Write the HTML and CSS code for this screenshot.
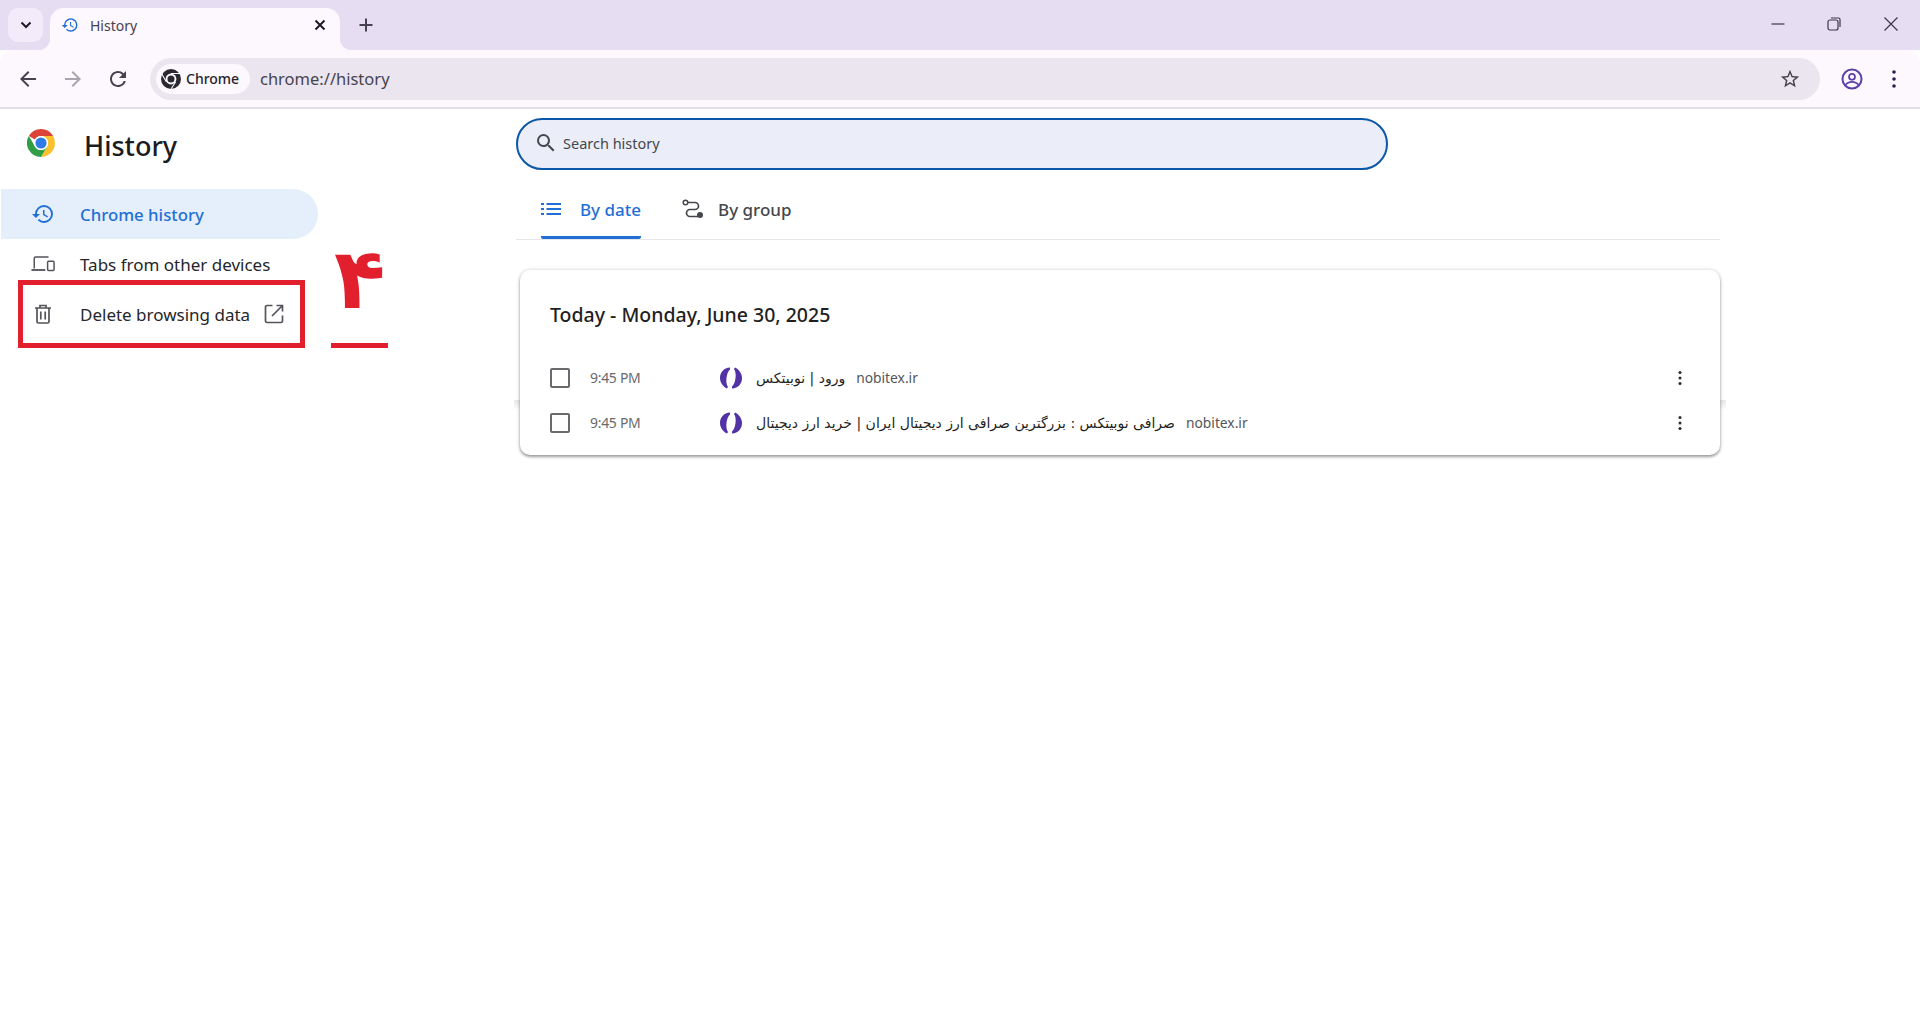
FILE: index.html
```html
<!DOCTYPE html>
<html lang="en">
<head>
<meta charset="utf-8">
<title>History</title>
<link rel="stylesheet" href="styles.css">
</head>
<body>
<header class="strip">
  <div class="tab-search"><svg class="ic14" viewBox="0 0 14 14"><path d="M2.500 4.500 7 9l4.500-4.500" fill="none" stroke="#1f1a28" stroke-width="2"/></svg></div>
  <div class="tab">
    <svg class="tab-fav" viewBox="0 0 24 24"><path fill="#1f6fd6" d="M13 3a9 9 0 0 0-9 9H1l3.890 3.890.07.14L9 12H6c0-3.870 3.130-7 7-7s7 3.130 7 7-3.130 7-7 7c-1.930 0-3.680-.79-4.940-2.060l-1.420 1.420A8.954 8.954 0 0 0 13 21a9 9 0 0 0 0-18zm-1 5v5l4.280 2.540.72-1.210-3.500-2.080V8H12z"/></svg>
    <span class="tab-title">History</span>
    <svg class="tab-x" viewBox="0 0 12 12"><path d="M1.500 1.500l9 9m0-9l-9 9" stroke="#1e1a26" stroke-width="2" fill="none"/></svg>
  </div>
  <svg class="plus" viewBox="0 0 14 14"><path d="M7 .5v13M.5 7h13" stroke="#47424f" stroke-width="2" fill="none"/></svg>
  <div class="win">
    <svg class="win-ic" viewBox="0 0 16 16"><path d="M1.500 8h13" stroke="#3c3746" stroke-width="1.200"/></svg>
    <svg class="win-ic" viewBox="0 0 16 16"><rect x="2" y="4" width="10" height="10" rx="2" fill="none" stroke="#3c3746" stroke-width="1.200"/><path d="M5 2h7.500A1.500 1.500 0 0 1 14 3.500V11" fill="none" stroke="#3c3746" stroke-width="1.200"/></svg>
    <svg class="win-ic" viewBox="0 0 16 16"><path d="M1.500 1.500l13 13m0-13l-13 13" stroke="#3c3746" stroke-width="1.200"/></svg>
  </div>
</header>

<nav class="toolbar">
  <svg class="tool back" viewBox="0 0 24 24"><path fill="#47424f" d="M20 11H7.830l5.590-5.590L12 4l-8 8 8 8 1.410-1.410L7.830 13H20v-2z"/></svg>
  <svg class="tool fwd" viewBox="0 0 24 24"><path fill="#a9a5ae" d="M4 11h12.170l-5.590-5.590L12 4l8 8-8 8-1.410-1.410L16.170 13H4v-2z"/></svg>
  <svg class="tool reload" viewBox="0 0 24 24"><path fill="#47424f" d="M17.650 6.350A7.958 7.958 0 0 0 12 4c-4.420 0-7.990 3.580-7.990 8s3.570 8 7.990 8c3.730 0 6.840-2.550 7.730-6h-2.080A5.990 5.990 0 0 1 12 18c-3.310 0-6-2.690-6-6s2.690-6 6-6c1.660 0 3.140.69 4.220 1.780L13 11h7V4l-2.350 2.350z"/></svg>
  <div class="omni">
    <div class="chip">
      <svg class="chip-logo" viewBox="0 0 48 48">
        <circle cx="24" cy="24" r="24" fill="#2b2831"/>
        <circle cx="24" cy="24" r="13" fill="#fff"/>
        <circle cx="24" cy="24" r="8.500" fill="#2b2831"/>
        <path d="M24 11H46M13 31 2 12M35 31 24 48" stroke="#fff" stroke-width="2.500"/>
      </svg>
      <span>Chrome</span>
    </div>
    <span class="url">chrome://history</span>
    <svg class="star" viewBox="0 0 24 24"><path fill="#47424f" d="M22 9.240l-7.190-.62L12 2 9.190 8.630 2 9.240l5.460 4.730L5.820 21 12 17.270 18.180 21l-1.630-7.030L22 9.240zM12 15.400l-3.760 2.270 1-4.280-3.320-2.880 4.380-.38L12 6.100l1.710 4.040 4.380.38-3.320 2.880 1 4.280L12 15.400z"/></svg>
  </div>
  <svg class="profile" viewBox="0 0 24 24">
    <circle cx="12" cy="12" r="9.500" fill="none" stroke="#5d3fa8" stroke-width="2"/>
    <circle cx="12" cy="9.800" r="3" fill="none" stroke="#5d3fa8" stroke-width="1.700"/>
    <path d="M5.500 18c1.500-2.300 4-3.200 6.500-3.200s5 .9 6.500 3.200" fill="none" stroke="#5d3fa8" stroke-width="1.700"/>
  </svg>
  <svg class="dots" viewBox="0 0 4 18"><circle cx="2" cy="2" r="1.800" fill="#2b2150"/><circle cx="2" cy="9" r="1.800" fill="#2b2150"/><circle cx="2" cy="16" r="1.800" fill="#2b2150"/></svg>
</nav>

<div class="page">
  <aside class="side">
    <div class="brand">
      <svg class="logo" viewBox="0 0 48 48">
        <path fill="#db4437" d="M24 0A24 24 0 0 1 44.780 12H24A12 12 0 0 0 13.600 18L3.200 12A24 24 0 0 1 24 0Z"/>
        <path fill="#fbc02d" d="M44.780 12A24 24 0 0 1 24 48L34.400 30A12 12 0 0 0 34.400 18 12 12 0 0 0 24 12Z"/>
        <path fill="#2f9e44" d="M3.200 12 13.600 30A12 12 0 0 0 34.400 30L24 48A24 24 0 0 1 3.200 12Z"/>
        <circle cx="24" cy="24" r="12" fill="#fff"/>
        <circle cx="24" cy="24" r="9.500" fill="#2f7be8"/>
      </svg>
      <h1 class="brand-title">History</h1>
    </div>
    <ul class="menu">
      <li class="item active">
        <svg class="item-ic" viewBox="0 0 24 24"><path fill="#1f6fd6" d="M13 3a9 9 0 0 0-9 9H1l3.890 3.890.07.14L9 12H6c0-3.870 3.130-7 7-7s7 3.130 7 7-3.130 7-7 7c-1.930 0-3.680-.79-4.940-2.060l-1.420 1.420A8.954 8.954 0 0 0 13 21a9 9 0 0 0 0-18zm-1 5v5l4.280 2.540.72-1.210-3.500-2.080V8H12z"/></svg>
        <span>Chrome history</span>
      </li>
      <li class="item">
        <svg class="item-ic" viewBox="0 0 26 18"><path d="M3.500 14V3A1.500 1.500 0 0 1 5 1.500h14" fill="none" stroke="#55525a" stroke-width="1.600"/><path d="M.5 15.500h15" stroke="#55525a" stroke-width="2"/><rect x="18" y="6" width="7" height="10" rx="1" fill="none" stroke="#55525a" stroke-width="1.600"/></svg>
        <span>Tabs from other devices</span>
      </li>
      <li class="item">
        <svg class="item-ic trash" viewBox="0 0 18 20"><path d="M1 4h16M6 4V1.500h6V4M3 4v13.500A1.500 1.500 0 0 0 4.500 19h9a1.500 1.500 0 0 0 1.500-1.500V4M6.800 7.500v8M11.200 7.500v8" fill="none" stroke="#55525a" stroke-width="1.700"/></svg>
        <span>Delete browsing data</span>
        <svg class="ext" viewBox="0 0 20 20"><path d="M8.500 1.500H3A1.500 1.500 0 0 0 1.500 3v14A1.500 1.500 0 0 0 3 18.500h14a1.500 1.500 0 0 0 1.500-1.500v-5.500M12.500 1.500h6v6M18.500 1.500 8 12" fill="none" stroke="#55525a" stroke-width="1.700"/></svg>
      </li>
    </ul>
    <div class="mark-box"></div>
    <div class="mark-num">۴</div>
    <div class="mark-line"></div>
  </aside>

  <main class="main">
    <div class="search">
      <svg class="search-ic" viewBox="0 0 24 24"><path fill="#45474c" d="M15.500 14h-.79l-.28-.27A6.471 6.471 0 0 0 16 9.500 6.500 6.500 0 1 0 9.500 16c1.610 0 3.090-.59 4.230-1.570l.27.28v.79l5 4.990L20.490 19l-4.990-5zm-6 0C7.010 14 5 11.990 5 9.500S7.010 5 9.500 5 14 7.010 14 9.500 11.990 14 9.500 14z"/></svg>
      <span class="search-text">Search history</span>
    </div>
    <div class="tabs">
      <div class="t-tab sel">
        <svg class="t-ic" viewBox="0 0 20 14"><path d="M5.500 2H20M5.500 7H20M5.500 12H20" stroke="#1f6fd6" stroke-width="2"/><path d="M0 2h3M0 7h3M0 12h3" stroke="#1f6fd6" stroke-width="2"/></svg>
        <span>By date</span>
      </div>
      <div class="t-tab">
        <svg class="t-ic group" viewBox="0 0 22 20"><circle cx="3.500" cy="3.500" r="2.300" fill="none" stroke="#45474c" stroke-width="1.500"/><path d="M6 3.500h7a3.500 3.500 0 0 1 0 7H8a3.500 3.500 0 0 0 0 7h8" fill="none" stroke="#45474c" stroke-width="1.700"/><circle cx="18" cy="16" r="3" fill="#45474c"/></svg>
        <span>By group</span>
      </div>
    </div>
    <section class="card">
      <h2 class="day">Today - Monday, June 30, 2025</h2>
      <div class="row">
        <span class="check"></span>
        <span class="time">9:45 PM</span>
        <svg class="fav" viewBox="0 0 22 22"><path fill="#5233a5" d="M10 .5C3.500 1 0 5.500 0 11c0 4.500 3 8.500 7 10.500l1-1.500C6.500 18 6 14.500 6.500 11c.5-4 1.500-6.500 3.500-8.500z"/><path fill="#5233a5" transform="rotate(180 11 11)" d="M10 .5C3.500 1 0 5.500 0 11c0 4.500 3 8.500 7 10.500l1-1.500C6.500 18 6 14.500 6.500 11c.5-4 1.500-6.500 3.500-8.500z"/></svg>
        <span class="title" dir="rtl">ورود | نوبیتکس</span>
        <span class="domain">nobitex.ir</span>
        <svg class="more" viewBox="0 0 4 16"><circle cx="2" cy="2.500" r="1.500" fill="#2a2a2e"/><circle cx="2" cy="8" r="1.500" fill="#2a2a2e"/><circle cx="2" cy="13.500" r="1.500" fill="#2a2a2e"/></svg>
      </div>
      <div class="row">
        <span class="check"></span>
        <span class="time">9:45 PM</span>
        <svg class="fav" viewBox="0 0 22 22"><path fill="#5233a5" d="M10 .5C3.500 1 0 5.500 0 11c0 4.500 3 8.500 7 10.500l1-1.500C6.500 18 6 14.500 6.500 11c.5-4 1.500-6.500 3.500-8.500z"/><path fill="#5233a5" transform="rotate(180 11 11)" d="M10 .5C3.500 1 0 5.500 0 11c0 4.500 3 8.500 7 10.500l1-1.500C6.500 18 6 14.500 6.500 11c.5-4 1.500-6.500 3.500-8.500z"/></svg>
        <span class="title" dir="rtl">صرافی نوبیتکس : بزرگترین صرافی ارز دیجیتال ایران | خرید ارز دیجیتال</span>
        <span class="domain">nobitex.ir</span>
        <svg class="more" viewBox="0 0 4 16"><circle cx="2" cy="2.500" r="1.500" fill="#2a2a2e"/><circle cx="2" cy="8" r="1.500" fill="#2a2a2e"/><circle cx="2" cy="13.500" r="1.500" fill="#2a2a2e"/></svg>
      </div>
    </section>
  </main>
</div>
</body>
</html>
```

FILE: styles.css
```css
* { box-sizing: border-box; }
html, body { margin: 0; height: 100%; }
body {
  background: #fff;
  font-family: "Noto Sans", "Open Sans", "DejaVu Sans", sans-serif;
  color: #1f1f22;
  overflow: hidden;
  display: flex;
  flex-direction: column;
}

.strip {
  height: 50px;
  background: #e7ddf3;
  display: flex;
  align-items: flex-start;
  flex: none;
}
.tab-search {
  width: 35px; height: 34px;
  margin: 8px 7px 0 8px;
  background: #f3ebfa;
  border-radius: 10px;
  display: flex; align-items: center; justify-content: center;
}
.ic14 { width: 14px; height: 14px; }
.tab {
  position: relative;
  width: 290px; height: 42px;
  margin-top: 8px;
  background: #fdf7fe;
  border-radius: 14px 14px 0 0;
  display: flex; align-items: center;
  padding: 0 14px 8px 11px;
}
.tab::before, .tab::after {
  content: "";
  position: absolute;
  bottom: 0;
  width: 12px; height: 12px;
}
.tab::before { left: -12px; background: radial-gradient(circle at 0 0, transparent 12px, #fdf7fe 12.500px); }
.tab::after { right: -12px; background: radial-gradient(circle at 100% 0, transparent 12px, #fdf7fe 12.500px); }
.tab-fav { width: 18px; height: 18px; }
.tab-title { margin-left: 11px; font-size: 14px; color: #45414d; flex: 1; }
.tab-x { width: 12px; height: 12px; }
.plus { width: 14px; height: 14px; margin: 18px 0 0 19px; }
.win { margin-left: auto; display: flex; }
.win-ic { width: 16px; height: 16px; margin-top: 16px; display: block; }
.win-ic:nth-child(1) { margin-right: 40px; }
.win-ic:nth-child(2) { margin-right: 41px; }
.win-ic:nth-child(3) { margin-right: 21px; }

.toolbar {
  height: 59px;
  flex: none;
  background: #fdf7fe;
  border-bottom: 2px solid #e2dee6;
  border-radius: 14px 14px 0 0;
  display: flex;
  align-items: center;
}
.tool { width: 24px; height: 24px; flex: none; }
.back { margin: 0 0 0 16px; }
.fwd { margin-left: 21px; }
.reload { margin-left: 21px; }
.omni {
  flex: 1;
  height: 42px;
  margin-left: 20px;
  background: #eae5ee;
  border-radius: 21px;
  display: flex;
  align-items: center;
  padding: 0 19px 0 6px;
}
.chip {
  height: 30px;
  width: 94px;
  background: #fdf7fe;
  border-radius: 15px;
  display: flex; align-items: center;
  padding-left: 5px;
  font-size: 14px;
  font-weight: 500;
  color: #26232c;
}
.chip-logo { width: 20px; height: 20px; margin-right: 5px; }
.url { margin-left: 10px; font-size: 16.500px; color: #47434f; flex: 1; }
.star { width: 22px; height: 22px; }
.profile { width: 24px; height: 24px; margin-left: 20px; flex: none; }
.dots { width: 4px; height: 18px; margin: 0 24px 0 28px; flex: none; }

.page { flex: 1; display: flex; min-height: 0; }
.side { position: relative; width: 516px; flex: none; }
.brand { display: flex; align-items: center; height: 60px; margin-top: 6px; padding-left: 27px; }
.logo { width: 28px; height: 28px; margin-top: -4px; }
.brand-title { margin: 0 0 0 29px; font-size: 27px; font-weight: 500; color: #1b1c20; }
.menu { list-style: none; margin: 14px 0 0; padding: 0; width: 318px; }
.item {
  height: 50px;
  display: flex; align-items: center;
  padding-left: 31px;
  font-size: 17px;
  color: #26262b;
}
.active {
  margin-left: 1px;
  padding-left: 30px;
  background: #e5eefb;
  border-radius: 0 25px 25px 0;
  color: #1f6fd6;
  font-weight: 500;
  font-size: 16.800px;
}
.item-ic { width: 24px; height: 24px; margin-right: 25px; flex: none; }
.trash { width: 18px; height: 20px; margin: 0 28px 0 3px; }
.ext { width: 20px; height: 20px; margin-left: 14px; }
.mark-box {
  position: absolute;
  left: 18px; top: 171px;
  width: 287px; height: 68px;
  border: 5px solid #e21f2d;
}
.mark-num {
  position: absolute;
  left: 334px; top: 120px;
  font-family: "DejaVu Sans", sans-serif;
  font-size: 84px;
  font-weight: 700;
  line-height: 100px;
  color: #e21f2d;
}
.mark-line {
  position: absolute;
  left: 331px; top: 234px;
  width: 57px; height: 5px;
  background: #e21f2d;
}

.main { width: 1204px; padding-top: 9px; }
.search {
  width: 872px; height: 52px;
  background: #ebeef8;
  border: 2px solid #0b57a8;
  border-radius: 26px;
  display: flex; align-items: center;
  padding-left: 16px;
  padding-bottom: 2px;
  font-size: 14.500px;
  color: #45474c;
}
.search-ic { width: 24px; height: 24px; margin-right: 5px; }
.tabs {
  height: 70px;
  border-bottom: 1px solid #e6e6e8;
  display: flex;
  padding-left: 25px;
  gap: 42px;
}
.t-tab {
  display: flex; align-items: center;
  height: 69px;
  padding-top: 12px;
  padding-bottom: 3px;
  font-size: 17px;
  color: #45474c;
  font-weight: 500;
}
.sel { color: #1f6fd6; border-bottom: 3px solid #1f6fd6; border-radius: 0 0 2px 2px; padding-bottom: 0; }
.t-ic { width: 20px; height: 14px; margin-right: 19px; }
.group { width: 22px; height: 20px; margin-right: 14px; margin-left: -1px; }
.card {
  position: relative;
  width: 1200px;
  height: 185px;
  margin: 30px 0 0 4px;
  background: #fff;
  border-radius: 10px;
  box-shadow: 0 2px 3px rgba(0,0,0,.35), 0 0 4px rgba(0,0,0,.16);
  padding: 0 30px;
}
.card::before {
  content: "";
  position: absolute;
  z-index: -1;
  top: 130px;
  left: -6px; right: -6px;
  height: 10px;
  background: linear-gradient(#e8e8e8, #fff);
}
.day {
  margin: 0;
  height: 85px;
  padding-top: 30px;
  font-size: 19.500px;
  line-height: 30px;
  font-weight: 500;
  color: #1f1f22;
}
.row { height: 45px; display: flex; align-items: center; }
.check {
  width: 20px; height: 20px;
  border: 2px solid #6a6a6e;
  border-radius: 2px;
  flex: none;
}
.time { width: 130px; margin-left: 20px; font-size: 14px; color: #6a6a6e; flex: none; letter-spacing: -.3px; }
.fav { width: 22px; height: 22px; flex: none; margin-right: 14px; }
.title { font-family: "DejaVu Sans", sans-serif; font-size: 14px; color: #1f1f22; }
.domain { margin-left: 11px; font-size: 13.800px; color: #55555a; }
.more { width: 4px; height: 16px; margin-left: auto; margin-right: 8px; }
```
